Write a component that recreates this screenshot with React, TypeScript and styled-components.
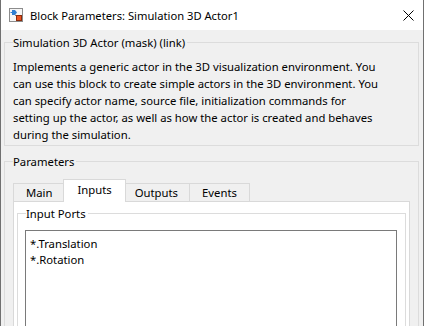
import React from "react";
import styled, { createGlobalStyle } from "styled-components";

const GlobalStyle = createGlobalStyle`
  html, body {
    margin: 0;
    padding: 0;
    background: #ffffff;
  }
  body {
    font-family: "Noto Sans", "Liberation Sans", sans-serif;
    font-size: 11.3px;
    color: #000000;
  }
`;

const Window = styled.div`
  width: 424px;
  height: 326px;
  box-sizing: border-box;
  border-left: 1px solid #707070;
  border-right: 1px solid #707070;
  background: #f0f0f0;
  display: flex;
  flex-direction: column;
  overflow: hidden;
`;

const TitleBar = styled.div`
  flex: none;
  height: 30px;
  background: #ffffff;
  display: flex;
  align-items: center;
  padding: 0 9px 0 8px;
  gap: 7px;
`;

const TitleText = styled.div`
  flex: 1;
  font-size: 11.2px;
  line-height: 16px;
  padding-top: 1px;
`;

const Body = styled.div`
  flex: 1;
  display: flex;
  flex-direction: column;
  padding: 0 4px 0 3px;
`;

const GroupBox = styled.fieldset<{ $top: number }>`
  margin: ${(p) => p.$top}px 0 0 0;
  padding: 0 8px 2px 8px;
  border: 1px solid #dcdcdc;
  min-width: 0;
  display: flex;
  flex-direction: column;
`;

const Legend = styled.legend`
  padding: 0 2px 0 0;
  line-height: 17px;
`;

const Description = styled.div`
  margin-top: 7px;
  line-height: 17px;
  white-space: nowrap;
`;

const TabStrip = styled.div`
  margin-top: 9px;
  display: flex;
  align-items: flex-end;
  height: 22px;
`;

const Tab = styled.div<{ $active?: boolean }>`
  box-sizing: border-box;
  border: 1px solid #d9d9d9;
  border-bottom: none;
  background: ${(p) => (p.$active ? "#ffffff" : "#f0f0f0")};
  height: ${(p) => (p.$active ? 23 : 18)}px;
  line-height: ${(p) => (p.$active ? 20 : 17)}px;
  padding: 0 ${(p) => (p.$active ? 13 : 12)}px;
  margin: 0 ${(p) => (p.$active ? -2 : 0)}px ${(p) => (p.$active ? -1 : 0)}px 0;
  position: relative;
  z-index: ${(p) => (p.$active ? 1 : 0)};
  & + & {
    margin-left: ${(p) => (p.$active ? -2 : -1)}px;
  }
`;

const Panel = styled.div`
  border: 1px solid #d9d9d9;
  background: #ffffff;
  padding: 3px 3px 0 3px;
  height: 140px;
`;

const ListBox = styled.div`
  margin: 8px 0 0 -1px;
  border: 1px solid #7a7a7a;
  background: #ffffff;
  padding: 5px 4px;
  height: 100px;
  line-height: 16px;
`;

function BlockIcon() {
  return (
    <svg width="14" height="14" viewBox="0 0 14 14">
      <rect x="0.5" y="0.5" width="13" height="13" fill="#f6f6f6" stroke="#8c8c8c" />
      <line x1="1.5" y1="4.5" x2="3" y2="4.5" stroke="#2f7fd1" />
      <polygon points="3,2 6,2 8,4.5 6,7 3,7" fill="#2f7fd1" />
      <line x1="6" y1="7" x2="9" y2="9" stroke="#6a6a6a" />
      <rect x="7.5" y="7.5" width="5" height="5" fill="#e8521f" stroke="#8a2c0c" />
    </svg>
  );
}

function CloseIcon() {
  return (
    <svg width="11" height="11" viewBox="0 0 11 11">
      <path d="M0.5 0.5 L10.5 10.5 M10.5 0.5 L0.5 10.5" stroke="#000000" strokeWidth="1" fill="none" />
    </svg>
  );
}

export default function App() {
  const tabs = ["Main", "Inputs", "Outputs", "Events"];
  return (
    <>
      <GlobalStyle />
      <Window>
        <TitleBar>
          <BlockIcon />
          <TitleText>Block Parameters: Simulation 3D Actor1</TitleText>
          <CloseIcon />
        </TitleBar>
        <Body>
          <GroupBox $top={4}>
            <Legend>Simulation 3D Actor (mask) (link)</Legend>
            <Description>
              Implements a generic actor in the 3D visualization environment. You
              <br />
              can use this block to create simple actors in the 3D environment. You
              <br />
              can specify actor name, source file, initialization commands for
              <br />
              setting up the actor, as well as how the actor is created and behaves
              <br />
              during the simulation.
            </Description>
          </GroupBox>
          <GroupBox $top={7}>
            <Legend>Parameters</Legend>
            <TabStrip>
              {tabs.map((t) => (
                <Tab key={t} $active={t === "Inputs"}>
                  {t}
                </Tab>
              ))}
            </TabStrip>
            <Panel>
              <GroupBox $top={0}>
                <Legend>Input Ports</Legend>
                <ListBox>
                  *.Translation
                  <br />
                  *.Rotation
                </ListBox>
              </GroupBox>
            </Panel>
          </GroupBox>
        </Body>
      </Window>
    </>
  );
}
